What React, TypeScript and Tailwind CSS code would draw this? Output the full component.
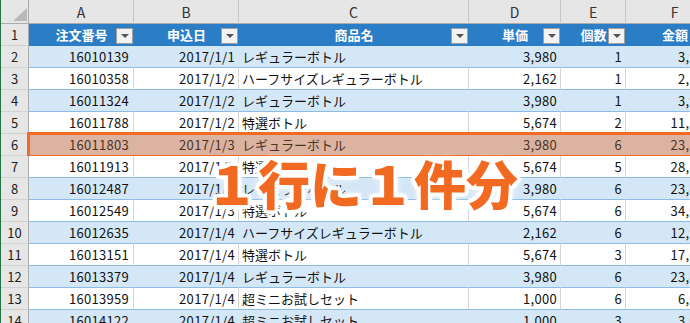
import React from "react";

const cols = [
  { key: "A", w: "w-[105px]", title: "注文番号", pad: "justify-end pr-[4px] tracking-[0.3px]" },
  { key: "B", w: "w-[105px]", title: "申込日", pad: "justify-end pr-[3px] tracking-[0.3px]" },
  { key: "C", w: "w-[230px]", title: "商品名", pad: "justify-start pl-[3px]" },
  { key: "D", w: "w-[92px]", title: "単価", pad: "justify-end pr-[3px] tracking-[0.3px]" },
  { key: "E", w: "w-[65px]", title: "個数", pad: "justify-end pr-[3px] tracking-[0.3px]" },
  { key: "F", w: "w-[98px]", title: "金額", pad: "justify-end pr-[11px] tracking-[0.3px]" },
];

const rows = [
  ["16010139", "2017/1/1", "レギュラーボトル", "3,980", "1", "3,980"],
  ["16010358", "2017/1/2", "ハーフサイズレギュラーボトル", "2,162", "1", "2,162"],
  ["16011324", "2017/1/2", "レギュラーボトル", "3,980", "1", "3,980"],
  ["16011788", "2017/1/2", "特選ボトル", "5,674", "2", "11,348"],
  ["16011803", "2017/1/3", "レギュラーボトル", "3,980", "6", "23,880"],
  ["16011913", "2017/1/3", "特選ボトル", "5,674", "5", "28,370"],
  ["16012487", "2017/1/3", "レギュラーボトル", "3,980", "6", "23,880"],
  ["16012549", "2017/1/3", "特選ボトル", "5,674", "6", "34,044"],
  ["16012635", "2017/1/4", "ハーフサイズレギュラーボトル", "2,162", "6", "12,972"],
  ["16013151", "2017/1/4", "特選ボトル", "5,674", "3", "17,022"],
  ["16013379", "2017/1/4", "レギュラーボトル", "3,980", "6", "23,880"],
  ["16013959", "2017/1/4", "超ミニお試しセット", "1,000", "6", "6,000"],
  ["16014122", "2017/1/4", "超ミニお試しセット", "1,000", "3", "3,000"],
];

const FilterButton = () => (
  <span className="absolute right-[1px] top-[4px] w-[17px] h-[16px] bg-[#f3f3f3] border border-[#a0a0a0] flex items-center justify-center">
    <svg width="8" height="4" viewBox="0 0 8 4">
      <path d="M0 0 L8 0 L4 4 Z" fill="#555" />
    </svg>
  </span>
);

const RowHead = ({ n }: { n: number }) => (
  <div className="w-[28px] shrink-0 bg-[#e6e6e6] border-r border-b border-r-[#ababab] border-b-[#d2d2d2] flex items-center justify-center text-[#222]">
    {n}
  </div>
);

export default function App() {
  return (
    <div
      className="relative w-[690px] h-[323px] overflow-hidden bg-white border-l border-[#217346] text-[13px] text-[#111]"
      style={{ fontFamily: '"Noto Sans CJK JP", "Noto Sans", sans-serif' }}
    >
      {/* column letters */}
      <div className="flex h-[24px] leading-none">
        <div className="w-[28px] shrink-0 bg-[#e6e6e6] border-r border-b border-[#ababab] relative">
          <svg className="absolute left-[12px] top-[8px]" width="14" height="13" viewBox="0 0 14 13">
            <path d="M14 0 L14 13 L0 13 Z" fill="#b9b9b9" />
          </svg>
        </div>
        {cols.map((c) => (
          <div
            key={c.key}
            className={`${c.w} shrink-0 bg-[#e6e6e6] border-r border-b border-r-[#c6c6c6] border-b-[#ababab] flex items-center justify-center text-[14px] text-[#333]`}
          >
            {c.key}
          </div>
        ))}
      </div>

      {/* table header */}
      <div className="flex h-[22px] leading-none">
        <RowHead n={1} />
        {cols.map((c) => (
          <div
            key={c.key}
            className={`${c.w} shrink-0 relative bg-[#2b7ec6] border-b border-[#2b7ec6] flex items-center justify-center font-bold text-white`}
          >
            {c.title}
            {c.key !== "F" && <FilterButton />}
          </div>
        ))}
      </div>

      {rows.map((r, i) => {
        const n = i + 2;
        const hi = n === 6;
        const band = n % 2 === 0;
        const bg = hi
          ? "bg-[#dcb3a1] border-r-[#dcb3a1] text-[#4a3326]"
          : band
          ? "bg-[#d4e7f7] border-r-[#d4e7f7]"
          : "bg-white border-r-[#d6d6d6]";
        return (
          <div key={n} className="relative flex h-[22px] leading-none">
            <RowHead n={n} />
            {cols.map((c, j) => (
              <div
                key={c.key}
                className={`${c.w} shrink-0 border-r border-b border-b-[#8cbbe6] ${bg} flex items-center overflow-hidden whitespace-nowrap ${c.pad}`}
              >
                {r[j]}
              </div>
            ))}
            {hi && (
              <div className="absolute left-[26px] top-[-2px] bottom-[-2px] right-[-40px] border-[3px] border-[#f26b26]" />
            )}
          </div>
        );
      })}

      {/* overlay caption */}
      <div
        className="absolute left-[205px] top-[157px] text-[52px] font-black leading-none text-[#f26a21] whitespace-nowrap"
        style={{
          textShadow:
            "4px 0 0 #fff, -4px 0 0 #fff, 0 4px 0 #fff, 0 -4px 0 #fff, 3px 3px 0 #fff, -3px 3px 0 #fff, 3px -3px 0 #fff, -3px -3px 0 #fff, 0 0 8px #fff, 0 0 10px #fff",
        }}
      >
        １行に１件分
      </div>
    </div>
  );
}
